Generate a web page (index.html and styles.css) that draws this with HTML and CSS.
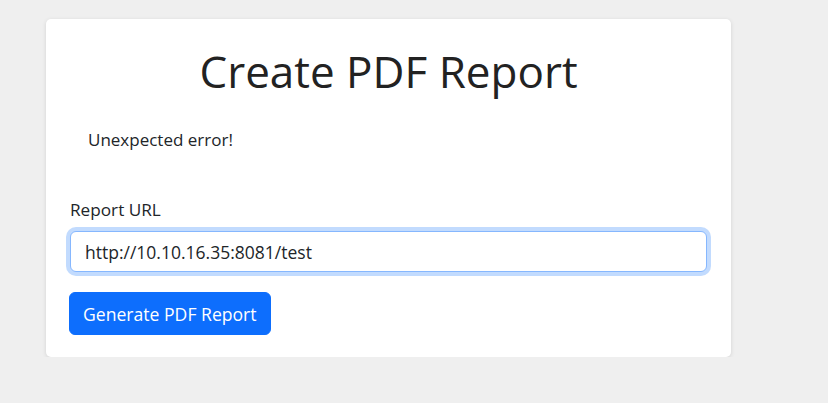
FILE: index.html
```html
<!DOCTYPE html>
<html lang="en">
<head>
<meta charset="utf-8">
<title>Create PDF Report</title>
<link rel="stylesheet" href="styles.css">
</head>
<body>
<main class="card">
  <h1 class="title">Create PDF Report</h1>
  <div class="message">Unexpected error!</div>
  <form class="form">
    <label class="label" for="url">Report URL</label>
    <div class="input-wrap">
      <input class="input" id="url" type="text" value="http://10.10.16.35:8081/test">
    </div>
    <button class="btn" type="button">Generate PDF Report</button>
  </form>
</main>
</body>
</html>
```
FILE: styles.css
```css
html, body {
  margin: 0;
  padding: 0;
}
body {
  background: #efefef;
  font-family: "Open Sans", "Noto Sans", sans-serif;
  color: #212529;
  padding: 19px 0 0 46px;
}
.card {
  box-sizing: border-box;
  width: 685px;
  background: #fff;
  border-radius: 5px;
  box-shadow: 0 1px 4px rgba(0,0,0,0.12);
  padding: 24px 24px 22px 24px;
}
.title {
  margin: 0;
  text-align: center;
  font-weight: 400;
  font-size: 44px;
  line-height: 56px;
  color: #222;
}
.message {
  padding: 28px 18px 0;
  font-size: 17px;
  line-height: 26px;
  color: #212529;
}
.form {
  margin-top: 45px;
  display: flex;
  flex-direction: column;
  align-items: flex-start;
}
.label {
  font-size: 17.2px;
  line-height: 24px;
  margin-bottom: 9px;
}
.input-wrap {
  align-self: stretch;
}
.input {
  box-sizing: border-box;
  width: 100%;
  height: 41px;
  padding: 6px 14px;
  font-family: inherit;
  font-size: 17.5px;
  color: #212529;
  border: 1px solid #86b7fe;
  border-radius: 6px;
  box-shadow: 0 0 0 4px rgba(13,110,253,0.25);
  outline: none;
  background: #fff;
}
.btn {
  margin-top: 20px;
  margin-left: -1px;
  height: 43px;
  padding: 0 13px;
  font-family: inherit;
  font-size: 17.6px;
  color: #fff;
  background: #0d6efd;
  border: 1px solid #0d6efd;
  border-radius: 6px;
}
```
